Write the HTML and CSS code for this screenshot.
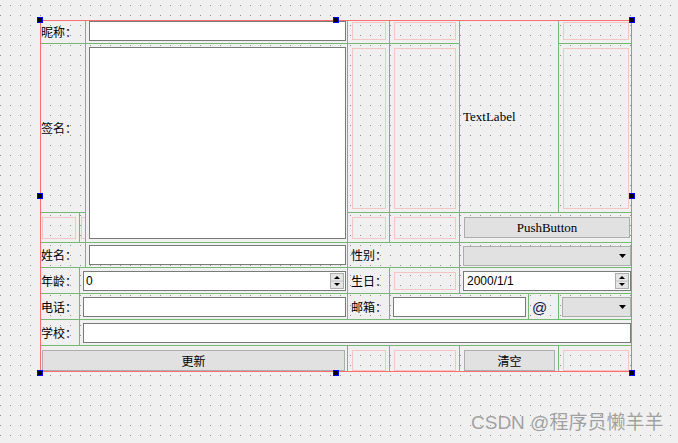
FILE: index.html
```html
<!DOCTYPE html>
<html lang="zh-CN">
<head>
  <meta charset="UTF-8" />
  <meta name="viewport" content="width=device-width, initial-scale=1.0" />
  <title>Form</title>
  <link rel="stylesheet" href="styles.css">
</head>
<body>
  <div class="form">
    <div class="layout">
      <!-- row 1 -->
      <div class="cell span2"><span class="label">昵称：</span></div>
      <div class="cell"><div class="edit top0"></div></div>
      <div class="cell"><div class="spacer top1"></div></div>
      <div class="cell"><div class="spacer top1"></div></div>
      <div class="cell rspan2"><span class="text-label">TextLabel</span></div>
      <div class="cell"><div class="spacer top1"></div></div>

      <!-- row 2 -->
      <div class="cell span2"><span class="label">签名：</span></div>
      <div class="cell rspan2"><div class="text-edit"></div></div>
      <div class="cell"><div class="spacer"></div></div>
      <div class="cell"><div class="spacer"></div></div>
      <div class="cell"><div class="spacer"></div></div>

      <!-- row 3 -->
      <div class="cell"><div class="spacer first"></div></div>
      <div class="cell"><div class="spacer narrow"></div></div>
      <div class="cell"><div class="spacer"></div></div>
      <div class="cell"><div class="spacer"></div></div>
      <div class="cell span2"><button class="btn push">PushButton</button></div>

      <!-- row 4 -->
      <div class="cell span2"><span class="label">姓名：</span></div>
      <div class="cell"><div class="edit top2"></div></div>
      <div class="cell span2"><span class="label right">性别：</span></div>
      <div class="cell span2">
        <div class="combo top2">
          <svg width="7" height="4" viewBox="0 0 7 4"><path d="M0 0h7l-3.5 4z" fill="#000"/></svg>
        </div>
      </div>

      <!-- row 5 -->
      <div class="cell"><span class="label">年龄：</span></div>
      <div class="cell span2">
        <div class="spinbox">
          <span class="value">0</span>
          <svg class="spin" width="14" height="16" viewBox="0 0 14 16">
            <rect x="0.5" y="0.5" width="13" height="15" fill="#e5e5e5" stroke="#adadad"/>
            <path d="M1 8h12" stroke="#c4c4c4"/>
            <path d="M4 6h6l-3-3z" fill="#000"/>
            <path d="M4 10h6l-3 3z" fill="#000"/>
          </svg>
        </div>
      </div>
      <div class="cell"><span class="label right">生日：</span></div>
      <div class="cell"><div class="spacer"></div></div>
      <div class="cell span2">
        <div class="spinbox">
          <span class="value date">2000/1/1</span>
          <svg class="spin" width="14" height="16" viewBox="0 0 14 16">
            <rect x="0.5" y="0.5" width="13" height="15" fill="#e5e5e5" stroke="#adadad"/>
            <path d="M1 8h12" stroke="#c4c4c4"/>
            <path d="M4 6h6l-3-3z" fill="#000"/>
            <path d="M4 10h6l-3 3z" fill="#000"/>
          </svg>
        </div>
      </div>

      <!-- row 6 -->
      <div class="cell"><span class="label">电话：</span></div>
      <div class="cell span2"><div class="edit"></div></div>
      <div class="cell"><span class="label right">邮箱：</span></div>
      <div class="cell span2 email">
        <div class="email-box"><div class="edit"></div></div>
        <div class="at-box"><span class="at">@</span></div>
      </div>
      <div class="cell">
        <div class="combo">
          <svg width="7" height="4" viewBox="0 0 7 4"><path d="M0 0h7l-3.5 4z" fill="#000"/></svg>
        </div>
      </div>

      <!-- row 7 -->
      <div class="cell"><span class="label">学校：</span></div>
      <div class="cell span6"><div class="edit"></div></div>

      <!-- row 8 -->
      <div class="cell span3"><button class="btn update">更新</button></div>
      <div class="cell"><div class="spacer bottom1"></div></div>
      <div class="cell"><div class="spacer bottom1"></div></div>
      <div class="cell"><button class="btn clear">清空</button></div>
      <div class="cell"><div class="spacer bottom1"></div></div>
    </div>

    <!-- selection frame of the layout -->
    <div class="frame"></div>
    <div class="handle h-tl"></div>
    <div class="handle h-tc"></div>
    <div class="handle h-tr"></div>
    <div class="handle h-ml"></div>
    <div class="handle h-mr"></div>
    <div class="handle h-bl"></div>
    <div class="handle h-bc"></div>
    <div class="handle h-br"></div>
  </div>

  <div class="watermark">CSDN @程序员懒羊羊</div>
</body>
</html>
```

FILE: styles.css
```css
* { box-sizing: border-box; }

body {
  margin: 0;
  padding: 20px 0 0 40px;
  width: 678px;
  height: 443px;
  position: relative;
  background-color: #f0f0f0;
  background-image: conic-gradient(from 270deg at 1px 1px, #8c8c8c 90deg, transparent 0);
  background-size: 10px 10px;
  background-position: 0 5px;
  font-family: "Noto Sans CJK SC", sans-serif;
  font-size: 12px;
  color: #000;
  overflow: hidden;
}

.form {
  position: relative;
  width: 592px;
  height: 352px;
}

.layout {
  display: grid;
  grid-template-columns: 39px 6px 262px 42px 70px 99px 74px;
  grid-template-rows: 23px 169px 30px 25px 26px 26px 26px 27px;
  width: 592px;
  height: 352px;
}

.cell {
  display: flex;
  min-width: 0;
  border-left: 1px solid #74b874;
  border-top: 1px solid #74b874;
}

.span2 { grid-column: span 2; }
.span3 { grid-column: span 3; }
.span6 { grid-column: span 6; }
.rspan2 { grid-row: span 2; }

/* widgets */
.label {
  align-self: center;
  white-space: nowrap;
  line-height: 14px;
}

.label.right { padding-left: 3px; }

.text-label {
  align-self: center;
  padding-left: 3px;
  font-family: "Liberation Serif", serif;
  font-size: 13px;
}

.edit {
  flex: 1;
  height: 20px;
  margin: 3px 1px 0 3px;
  background: #fff;
  border: 1px solid #7a7a7a;
}

.top0 { margin-top: 0; }
.top2 { margin-top: 2px; }

.text-edit {
  flex: 1;
  margin: 3px 1px 3px 3px;
  background: #fff;
  border: 1px solid #7a7a7a;
}

.spacer {
  flex: 1;
  margin: 4px 3px 3px 4px;
  border: 1px solid #f3c5c5;
}

.spacer.top1 { margin-top: 1px; }
.spacer.bottom1 { margin-bottom: 1px; }
.spacer.first { margin-left: 1px; }
.spacer.narrow { margin: 4px 0 3px 1px; border-right: none; }

.combo {
  flex: 1;
  height: 20px;
  margin: 3px 1px 0 3px;
  display: flex;
  align-items: center;
  justify-content: flex-end;
  padding-right: 4px;
  background: #e1e1e1;
  border: 1px solid #adadad;
}

.combo svg { display: block; }

.spinbox {
  flex: 1;
  height: 20px;
  margin: 3px 1px 0 3px;
  display: flex;
  align-items: center;
  background: #fff;
  border: 1px solid #7a7a7a;
}

.spinbox .value {
  flex: 1;
  padding-left: 2px;
  font-family: "Liberation Sans", sans-serif;
  font-size: 12px;
}

.spinbox .value.date { padding-left: 3px; }

.spin {
  display: block;
  margin-right: 1px;
}

.email { border-left: none; }

.email-box {
  display: flex;
  flex: 1;
  border-left: 1px solid #74b874;
}

.email-box .edit { margin-right: 2px; }

.at-box {
  width: 30px;
  display: flex;
  border-left: 1px solid #74b874;
}

.at {
  align-self: center;
  padding: 2px 0 0 3px;
  font-family: "Liberation Sans", sans-serif;
  font-size: 15px;
  color: #10204a;
}

.btn {
  height: 21px;
  margin-top: 4px;
  padding: 0;
  background: #e1e1e1;
  border: 1px solid #adadad;
  font-family: "Noto Sans CJK SC", sans-serif;
  font-size: 12px;
  color: #000;
}

.btn.push {
  width: 166px;
  margin-left: 4px;
  font-family: "Liberation Serif", serif;
  font-size: 13px;
}

.btn.update {
  width: 303px;
  margin-left: 1px;
}

.btn.clear {
  width: 91px;
  margin-left: 4px;
}

/* layout selection */
.frame {
  position: absolute;
  top: 0; left: 0;
  width: 100%; height: 100%;
  border: 1px solid #ff6e6e;
  pointer-events: none;
}

.handle {
  position: absolute;
  width: 6px;
  height: 6px;
  background: #000;
  border: 1px solid #0000ff;
}

.h-tl { left: -3px; top: -3px; }
.h-tc { left: 293px; top: -3px; }
.h-tr { left: 589px; top: -3px; }
.h-ml { left: -3px; top: 173px; }
.h-mr { left: 589px; top: 173px; }
.h-bl { left: -3px; top: 350px; }
.h-bc { left: 293px; top: 350px; }
.h-br { left: 589px; top: 350px; }

.watermark {
  position: absolute;
  left: 471px;
  top: 410px;
  font-family: "Liberation Sans", "Noto Sans CJK SC", sans-serif;
  font-size: 19px;
  line-height: 26px;
  color: #a0a0a0;
  text-shadow: 0 0 1px #fff;
  white-space: nowrap;
}
```
